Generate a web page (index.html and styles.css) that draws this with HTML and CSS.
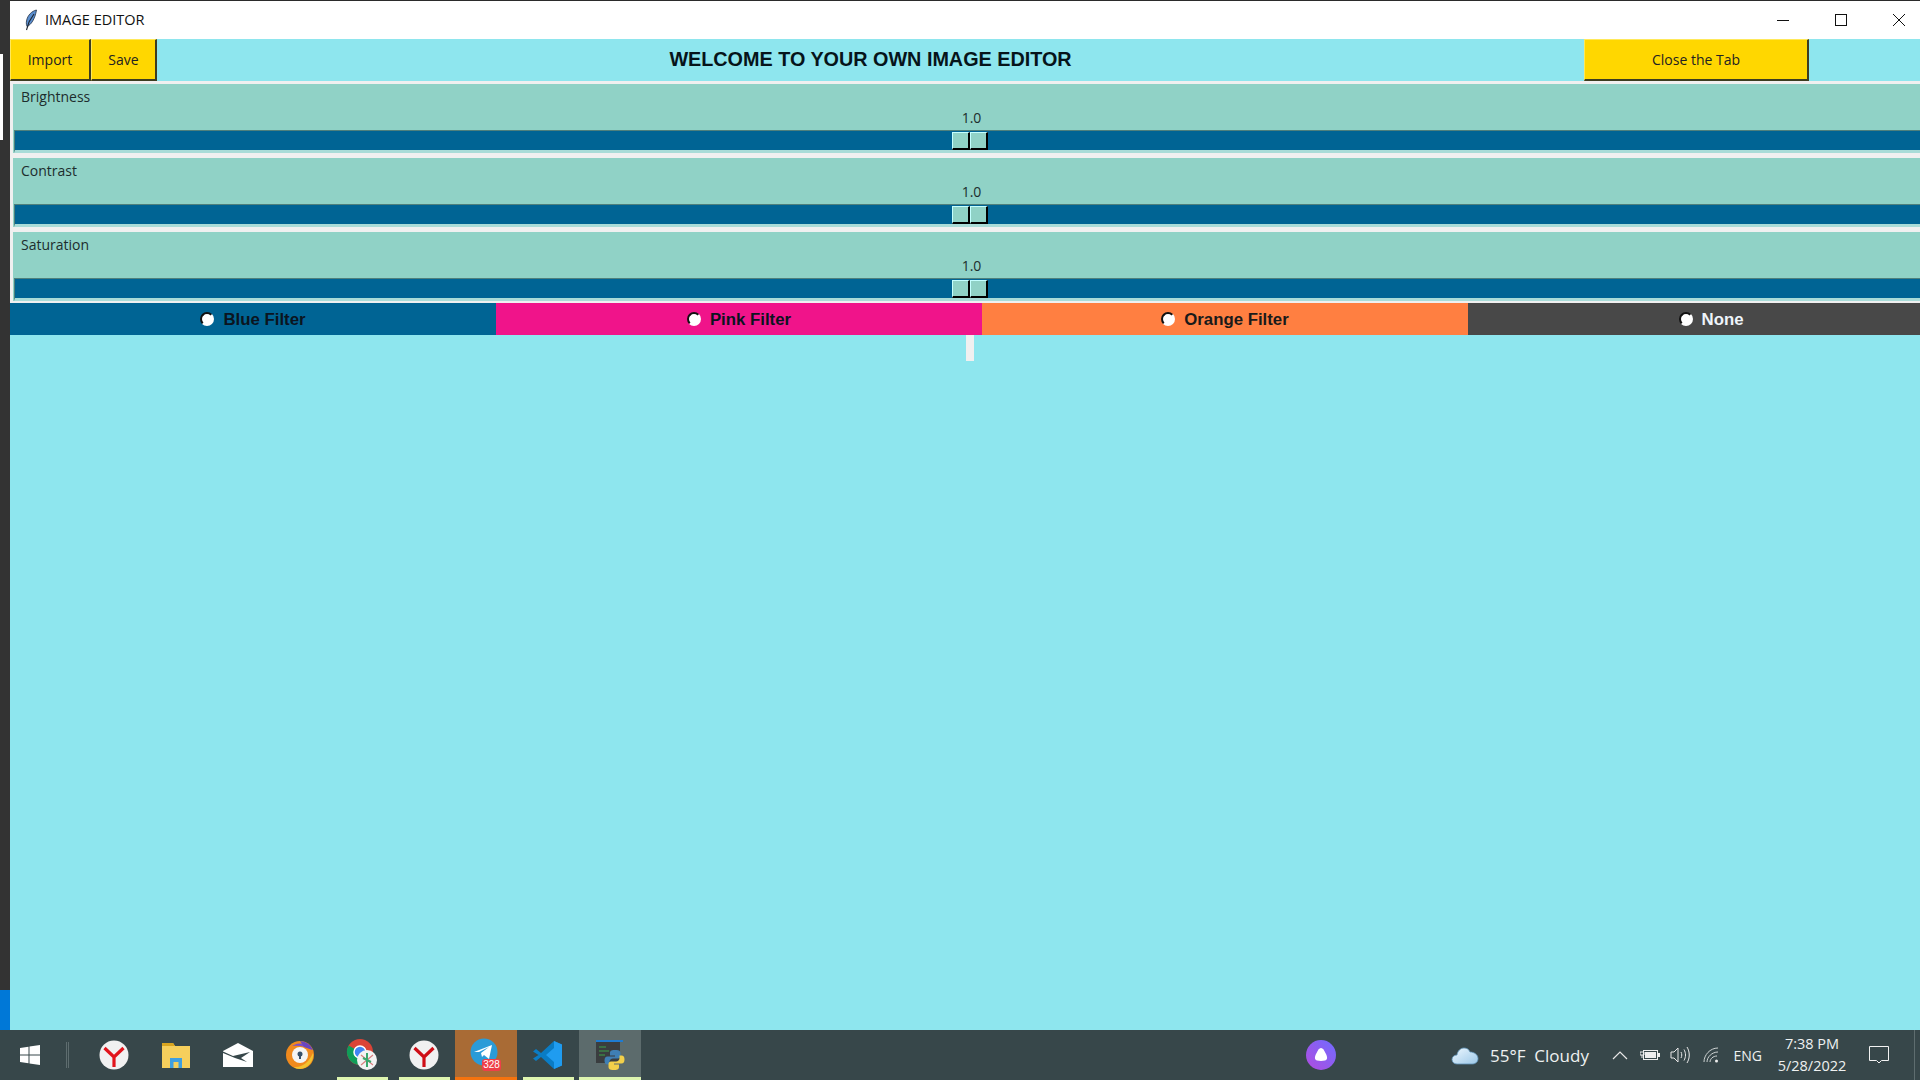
FILE: index.html
```html
<!DOCTYPE html>
<html lang="en">
  <head>
    <meta charset="UTF-8" />
    <title>IMAGE EDITOR</title>
    <link rel="stylesheet" href="styles.css">
  </head>

  <body>
    <div class="desktop">
      <div class="strip">
        <div class="strip-white"></div>
        <div class="strip-blue"></div>
      </div>

      <div class="window">
        <div class="titlebar">
          <svg class="feather" width="14" height="22" viewBox="0 0 14 22">
            <path d="M12.500 1C8 2 3.500 6 2.500 12c-.4 2.500 0 4.500 .5 5.500C7 16 11 10 12.500 1z" fill="#5b8fd0" stroke="#1f2f45" stroke-width=".8"/>
            <path d="M10 5 5 13 2.500 21" fill="none" stroke="#1d2530" stroke-width="1.100"/>
          </svg>
          <span class="title-text">IMAGE EDITOR</span>
          <div class="controls">
            <svg width="14" height="14" viewBox="0 0 14 14"><path d="M1 7.500h12" stroke="#111" fill="none"/></svg>
            <svg width="14" height="14" viewBox="0 0 14 14"><rect x="1.500" y="1.500" width="11" height="11" stroke="#111" fill="none"/></svg>
            <svg width="14" height="14" viewBox="0 0 14 14"><path d="M1 1l12 12M13 1 1 13" stroke="#111" fill="none"/></svg>
          </div>
        </div>

        <div class="content">
          <div class="toolbar">
            <button class="tool-btn import-btn">Import</button>
            <button class="tool-btn save-btn">Save</button>
            <div class="heading">WELCOME TO YOUR OWN IMAGE EDITOR</div>
            <button class="tool-btn close-btn">Close the Tab</button>
          </div>

          <div class="slider-wrap">
            <div class="slider">
              <div class="slider-label">Brightness</div>
              <div class="slider-value">1.0</div>
              <div class="trough"><div class="handle"><i></i><i></i></div></div>
            </div>
          </div>
          <div class="slider-wrap">
            <div class="slider">
              <div class="slider-label">Contrast</div>
              <div class="slider-value">1.0</div>
              <div class="trough"><div class="handle"><i></i><i></i></div></div>
            </div>
          </div>
          <div class="slider-wrap">
            <div class="slider">
              <div class="slider-label">Saturation</div>
              <div class="slider-value">1.0</div>
              <div class="trough"><div class="handle"><i></i><i></i></div></div>
            </div>
          </div>

          <div class="filters">
            <label class="filter blue"><span class="radio"></span>Blue Filter</label>
            <label class="filter pink"><span class="radio"></span>Pink Filter</label>
            <label class="filter orange"><span class="radio"></span>Orange Filter</label>
            <label class="filter none"><span class="radio"></span>None</label>
          </div>

          <div class="canvas-stub"></div>
        </div>
      </div>
    </div>

    <div class="taskbar">
      <div class="start">
        <svg width="22" height="22" viewBox="0 0 22 22"><path d="M1 4l8.500-1.200v7.700H1zM10.500 2.600 21 1v9.500H10.500zM1 11.500h8.500v7.700L1 18zM10.500 11.500H21V21l-10.500-1.600z" fill="#fff"/></svg>
      </div>
      <div class="sep"></div>

      <div class="tile">
        <svg width="30" height="30" viewBox="0 0 30 30"><circle cx="15" cy="15" r="14.500" fill="#f1f1f1"/><path d="M5.500 8 15 17l9.500-9M15 17v10" fill="none" stroke="#e2141c" stroke-width="3.200"/></svg>
      </div>
      <div class="tile">
        <svg width="30" height="26" viewBox="0 0 30 26"><path d="M1 1h11l2 3h15v22H1z" fill="#f6cf5c"/><path d="M1 1h11l2 3H1z" fill="#d9a520"/><path d="M9 16h12v10h-3.500v-6h-5v6H9z" fill="#3f9fe0"/></svg>
      </div>
      <div class="tile">
        <svg width="30" height="24" viewBox="0 0 30 24"><path d="M0 8 15 0l15 8v16H0z" fill="#fff"/><path d="M0 8.500 10 13l17-4-9 6 6 4-12-4L0 10z" fill="#37474a"/></svg>
      </div>
      <div class="tile">
        <svg width="28" height="28" viewBox="0 0 28 28"><circle cx="14" cy="14" r="14" fill="#f08a1d"/><path d="M6 5a14 14 0 0 1 20 4C20 5 12 4 6 5z" fill="#7a50c8"/><path d="M14 0a14 14 0 0 1 13 9L18 6z" fill="#6a45c0"/><path d="M27 12a14 14 0 0 1-13 16c-3 0-5-1-6-2 8 1 15-5 19-14z" fill="#f2c230"/><circle cx="14" cy="14" r="8" fill="#f4f4f4"/><circle cx="14" cy="13" r="2.500" fill="#36506a"/><path d="M13 14h2v4h-2z" fill="#36506a"/></svg>
      </div>
      <div class="tile running">
        <svg class="chrome" width="32" height="32" viewBox="0 0 32 32"><circle cx="14" cy="13" r="13" fill="#db4437"/><path d="M14 13 2.700 6.500A13 13 0 0 0 14 26z" fill="#0f9d58"/><path d="M14 13h13a13 13 0 0 1-13 13z" fill="#ffcd40"/><circle cx="14" cy="13" r="6" fill="#4285f4" stroke="#fff" stroke-width="1.500"/><circle cx="21" cy="21" r="10" fill="#f2f2f2"/><path d="M15 16l12 10M27 16 15 26" stroke="#d98080" stroke-width="1.200"/><path d="M21 14v14M17 19l8 4" stroke="#3aa76d" stroke-width="2"/></svg>
      </div>
      <div class="tile running">
        <svg width="30" height="30" viewBox="0 0 30 30"><circle cx="15" cy="15" r="14.500" fill="#f1f1f1"/><path d="M5.500 8 15 17l9.500-9M15 17v10" fill="none" stroke="#cf0e16" stroke-width="3.200"/></svg>
      </div>
      <div class="tile telegram">
        <svg width="32" height="32" viewBox="0 0 32 32"><circle cx="14" cy="14" r="13.500" fill="#2a9bd8"/><path d="M4 14 22 7l-3 14-5-4-2 2-1-4 8-6-10 5z" fill="#fff"/></svg>
        <span class="badge">328</span>
      </div>
      <div class="tile running">
        <svg width="30" height="30" viewBox="0 0 30 30"><path d="M21 1 29 4.500v21L21 29 8 17l-5 4-3-2.500L5.500 15 0 11.500 3 9l5 4z" fill="#0a7cc4"/><path d="M21 1l8 3.500v21L21 29zM21 8l-8 7 8 7z" fill="#1f9cf0"/></svg>
      </div>
      <div class="tile running active">
        <svg width="30" height="32" viewBox="0 0 30 32">
          <rect x="1" y="3" width="24" height="21" fill="#3a3d3f"/>
          <rect x="1" y="1" width="27" height="2" fill="#1f7bd0"/>
          <path d="M4 8h7M4 12h10M4 16h6" stroke="#3da24a" stroke-width="1.200"/>
          <path d="M19.500 11c-3.500 0-4.500 1-4.500 3v2.500h5v1h-7.500c-2 0-3 1.500-3 4s1 4 3 4h2v-2.500c0-2 1.500-3.500 3.500-3.500h5c1.500 0 2.500-1 2.500-2.500V14c0-2-1.500-3-4-3z" fill="#3f7fb5"/>
          <path d="M19.500 11c-3.500 0-4.500 1-4.500 3v2.500h5v1h-7.500c-2 0-3 1.500-3 4s1 4 3 4h2v-2.500c0-2 1.500-3.500 3.500-3.500h5c1.500 0 2.500-1 2.500-2.500V14c0-2-1.500-3-4-3z" fill="#f2cf4a" transform="rotate(180 19.500 21)"/>
        </svg>
      </div>

      <div class="alice"><svg width="30" height="30" viewBox="0 0 30 30"><defs><linearGradient id="alice-bg" x1="0" y1="1" x2="1" y2="0"><stop offset="0" stop-color="#b24be0"/><stop offset="1" stop-color="#6f6cff"/></linearGradient></defs><circle cx="15" cy="15" r="15" fill="url(#alice-bg)"/><path d="M15 8c2 0 3 2 5 6 2 4 1 6-1 6.500-2.500.5-5.500.5-8 0-2-.5-3-2.500-1-6.500 2-4 3-6 5-6z" fill="#fff"/></svg></div>

      <div class="weather">
        <svg width="28" height="20" viewBox="0 0 28 20"><defs><linearGradient id="cloud" x1="0" y1="0" x2="1" y2="1"><stop offset="0" stop-color="#eef8ff"/><stop offset="1" stop-color="#9cc8e8"/></linearGradient></defs><path d="M6 19c-3 0-5-2-5-4.500S3 10 6 10c.5-4 3.500-7 7-7 3 0 5 1.500 6 4 4 0 8 2.500 8 6.500S24 19 21 19z" fill="url(#cloud)" stroke="#5f93b8" stroke-width=".8"/></svg>
        <span class="weather-text">55°F&nbsp; Cloudy</span>
      </div>

      <div class="tray">
        <svg class="chevron" width="16" height="10" viewBox="0 0 16 10"><path d="M1 9l7-7 7 7" fill="none" stroke="#e8e8e8" stroke-width="1.200"/></svg>
        <svg class="battery" width="20" height="12" viewBox="0 0 20 12"><rect x="3.500" y="1.500" width="14" height="9" fill="#37474a" stroke="#eee"/><rect x="5" y="3" width="11" height="6" fill="#eee"/><rect x="18" y="4" width="2" height="4" fill="#eee"/><path d="M0 3h4v3H0zM2 6v3" stroke="#eee" fill="none"/></svg>
        <svg class="volume" width="20" height="18" viewBox="0 0 20 18"><path d="M1 6h3l4-4v14l-4-4H1zM11 6c1 2 1 4 0 6M14 3.500c2 3.500 2 7.500 0 11M17 1c3 5 3 11 0 16" fill="none" stroke="#e8e8e8"/></svg>
        <svg class="wifi" width="16" height="16" viewBox="0 0 16 16"><path d="M1 15C1 8 7 1 15 1M4 15c0-5 5-10 11-10M7 15c0-3 3-6 7-6" fill="none" stroke="#cfd4d4"/><circle cx="13.500" cy="14" r="1.500" fill="#eee"/></svg>
        <span class="lang">ENG</span>
        <div class="clock"><div>7:38 PM</div><div>5/28/2022</div></div>
        <svg class="notif" width="20" height="19" viewBox="0 0 20 19"><path d="M.5.500h19v14h-7l-2.500 2.500L7.500 14.500h-7z" fill="none" stroke="#f2f2f2"/></svg>
        <div class="show-desktop"></div>
      </div>
    </div>
  </body>
</html>
```

FILE: styles.css
```css
body {
  margin: 0;
  width: 1920px;
  height: 1080px;
  overflow: hidden;
  background: #333;
  font-family: "Open Sans", "Liberation Sans", sans-serif;
}

.desktop {
  display: flex;
  height: 1030px;
}

.strip {
  width: 10px;
  flex: none;
  display: flex;
  flex-direction: column;
  background: #333;
}

.strip-white {
  width: 3px;
  height: 86px;
  margin-top: 54px;
  background: #fff;
}

.strip-blue {
  height: 40px;
  margin-top: auto;
  background: #0078d7;
}

.window {
  flex: 1;
  min-width: 0;
  display: flex;
  flex-direction: column;
  overflow: hidden;
  border-top: 1px solid #2b2b2b;
  background: #8ee6ee;
}

.titlebar {
  flex: none;
  height: 38px;
  display: flex;
  align-items: center;
  background: #fff;
  color: #111;
  font-size: 14.500px;
}

.feather {
  margin-left: 14px;
}

.title-text {
  margin-left: 7px;
  padding-bottom: 2px;
}

.controls {
  margin-left: auto;
  display: flex;
  gap: 44px;
  margin-right: 14px;
}

.content {
  width: 1920px;
  flex: 1;
  display: flex;
  flex-direction: column;
}

.toolbar {
  height: 42px;
  flex: none;
  display: flex;
}

.tool-btn {
  font-family: inherit;
  font-size: 14px;
  color: #222;
  background: #ffd700;
  padding: 0;
  border-style: solid;
  border-width: 1px 2px 2px 1px;
  border-color: #ffe95a #3d3d20 #3d3d20 #ffe95a;
}

.import-btn {
  width: 81px;
}

.save-btn {
  width: 66px;
}

.close-btn {
  width: 225px;
  margin-right: 121px;
}

.heading {
  flex: 1;
  text-align: center;
  font: bold 19.800px/40px "Liberation Sans", sans-serif;
  color: #06141a;
}

.slider-wrap {
  height: 69px;
  padding: 3px 0 2px;
  background: #f0f0f0;
}

.slider {
  height: 69px;
  margin-left: 3px;
  background: #90d2c6;
  color: #1d2d2d;
  font-size: 14px;
  display: flex;
  flex-direction: column;
}

.slider-label {
  height: 18px;
  margin-top: 4px;
  padding-left: 8px;
  line-height: 18px;
}

.slider-value {
  height: 18px;
  margin-top: 3px;
  line-height: 18px;
  text-align: center;
}

.trough {
  position: relative;
  height: 19px;
  margin: 3px 0 0 1px;
  background: #006494;
  border-top: 1px solid #4f807c;
  border-left: 1px solid #4f807c;
  border-bottom: 3px solid #a9dcd8;
}

.handle {
  position: absolute;
  top: 1px;
  left: 937px;
  display: flex;
  height: 18px;
}

.handle i {
  display: block;
  width: 15px;
  height: 15px;
  background: #90d2c6;
  border-style: solid;
  border-width: 1px 2px 2px 1px;
  border-color: #c4ffff #000 #000 #c4ffff;
}

.filters {
  flex: none;
  height: 32px;
  display: grid;
  grid-template-columns: repeat(4, 486px);
  font: bold 16.800px/20px "Liberation Sans", sans-serif;
  color: #0b1420;
}

.filter {
  display: flex;
  justify-content: center;
  align-items: center;
  gap: 9px;
  padding-top: 2px;
}

.filter.blue {
  background: #006494;
}

.filter.pink {
  background: #f0148a;
}

.filter.orange {
  background: #ff7f41;
  color: #1a1a1a;
}

.filter.none {
  background: #484848;
  color: #eef4fa;
}

.radio {
  width: 10px;
  height: 10px;
  margin-bottom: 2px;
  border-radius: 50%;
  background: #fff;
  border: 2px solid #111;
  border-right-color: rgba(255, 255, 255, 0.4);
  border-bottom-color: rgba(255, 255, 255, 0.4);
}

.canvas-stub {
  width: 8px;
  height: 26px;
  margin: 0 auto;
  background: #f0f0f0;
}

.taskbar {
  height: 50px;
  display: flex;
  align-items: stretch;
  background: #37474a;
  color: #eef1f1;
}

.start {
  flex: none;
  width: 48px;
  margin-left: 6px;
  display: flex;
  align-items: center;
  justify-content: center;
  margin-right: 12px;
}

.sep {
  flex: none;
  width: 3px;
  height: 26px;
  margin: 12px 14px 0 0;
  border-left: 1px solid #5e6d6f;
  border-right: 1px solid #5e6d6f;
  box-sizing: border-box;
}

.tile {
  position: relative;
  flex: none;
  width: 62px;
  box-sizing: border-box;
  display: flex;
  align-items: center;
  justify-content: center;
}

.tile.running::after {
  content: "";
  position: absolute;
  left: 6px;
  right: 5px;
  bottom: 0;
  height: 3px;
  background: #def5b0;
}

.tile.active {
  background: #5c6b6c;
}

.tile.active::after {
  left: 0;
  right: 0;
}

.telegram {
  background: #a96b35;
  border-bottom: 3px solid #f5730e;
}

.badge {
  position: absolute;
  left: 27px;
  bottom: 6px;
  width: 19px;
  height: 12px;
  border-radius: 3px;
  background: #ee3f48;
  color: #fff;
  font: 10px/12px "Liberation Sans", sans-serif;
  text-align: center;
}

.alice {
  flex: none;
  margin-left: 665px;
  display: flex;
  align-items: center;
}

.weather {
  flex: none;
  margin-left: 115px;
  display: flex;
  align-items: center;
}

.weather-text {
  margin-left: 11px;
  font-size: 17px;
  white-space: nowrap;
}

.tray {
  flex: none;
  margin-left: auto;
  display: flex;
  align-items: center;
  font-size: 14px;
  white-space: nowrap;
}

.battery {
  margin-left: 12px;
}

.volume {
  margin-left: 10px;
}

.wifi {
  margin-left: 13px;
}

.lang {
  margin-left: 15px;
}

.clock {
  width: 72px;
  margin-left: 14px;
  text-align: center;
  font-size: 14.500px;
  line-height: 22px;
}

.notif {
  margin-left: 21px;
}

.show-desktop {
  width: 1px;
  height: 50px;
  margin-left: 25px;
  margin-right: 5px;
  background: #5e6d6f;
}
```
